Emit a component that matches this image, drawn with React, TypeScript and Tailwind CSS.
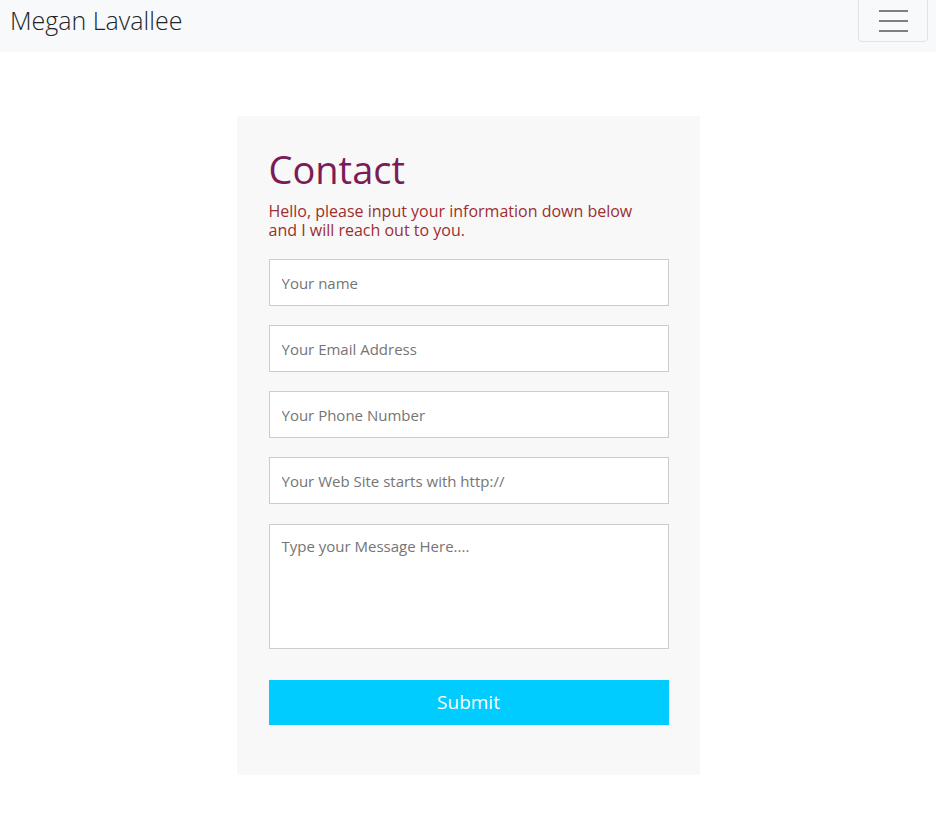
export default function App() {
  const fields = [
    'Your name',
    'Your Email Address',
    'Your Phone Number',
    'Your Web Site starts with http://',
  ];

  return (
    <div className="min-h-screen bg-white font-['Open_Sans',sans-serif]">
      {/* Navbar */}
      <nav className="h-[52px] bg-[#f8f9fa] flex items-start justify-between pl-[10px] pr-[8px]">
        <span className="mt-[2px] text-[25px] font-light leading-[36px] text-[#212529]">Megan Lavallee</span>
        <button className="-mt-[6px] w-[70px] h-[48px] border border-[#e3e3e3] rounded-[4px] flex items-center justify-center">
          <span className="flex flex-col gap-[8px] mt-[6px]">
            <span className="block w-[29px] h-[2px] bg-[#7f7f7f]" />
            <span className="block w-[29px] h-[2px] bg-[#7f7f7f]" />
            <span className="block w-[29px] h-[2px] bg-[#7f7f7f]" />
          </span>
        </button>
      </nav>

      {/* Contact card */}
      <div className="flex justify-center pt-[64px]">
        <div className="w-[463px] bg-[#f8f8f8] pl-[32px] pr-[31px] pt-[29px] pb-[50px]">
          <h1 className="text-[38px] leading-[48px] text-[#7b1c56]">Contact</h1>
          <p className="mt-[9px] max-w-[385px] text-[16px] leading-[19px] text-[#9c2f2f]">
            Hello, please input your information down below and I will reach out to you.
          </p>
          <form className="mt-[19px] flex flex-col gap-[19px]" onSubmit={(e) => e.preventDefault()}>
            {fields.map((f) => (
              <input
                key={f}
                placeholder={f}
                className="h-[47px] w-full bg-white border border-[#cccccc] px-[12px] text-[15px] text-[#333] placeholder:text-[#757575] outline-none"
              />
            ))}
            <textarea
              placeholder="Type your Message Here...."
              className="mt-[1px] h-[125px] w-full bg-white border border-[#cccccc] px-[12px] py-[10px] text-[15px] placeholder:text-[#757575] outline-none resize-none"
            />
            <button type="submit" className="mt-[12px] h-[45px] w-full bg-[#00ccff] text-white text-[19px]">
              Submit
            </button>
          </form>
        </div>
      </div>
    </div>
  );
}
